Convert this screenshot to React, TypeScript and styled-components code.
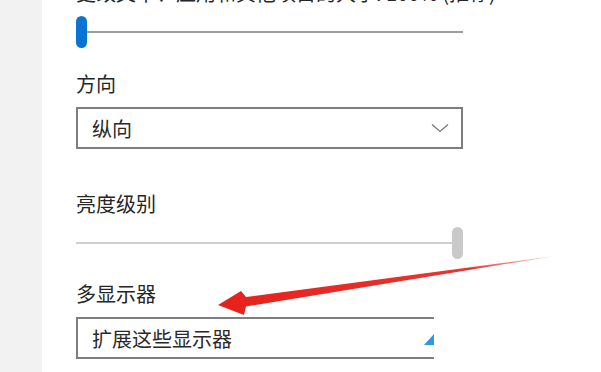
import React from "react";
import styled, { createGlobalStyle } from "styled-components";

const Global = createGlobalStyle`
  html, body { margin: 0; padding: 0; background: #ffffff; }
  body {
    width: 601px; height: 372px; overflow: hidden;
    font-family: "Noto Sans CJK SC", "Noto Sans", sans-serif;
    color: #1f1f1f;
  }
`;

const Page = styled.div`
  position: relative;
  display: flex;
  width: 601px;
  height: 372px;
  overflow: hidden;
  background: #ffffff;
`;

const Sidebar = styled.div`
  width: 42px;
  flex: none;
  background: #f2f2f2;
`;

const Main = styled.div`
  display: flex;
  flex-direction: column;
  padding-left: 34px;
  width: 387px;
`;

const Label = styled.div<{ $mt: number }>`
  margin-top: ${(p) => p.$mt}px;
  font-size: 20px;
  line-height: 24px;
  height: 24px;
  white-space: nowrap;
  color: #262626;
`;

const SliderRow = styled.div<{ $mt: number }>`
  position: relative;
  margin-top: ${(p) => p.$mt}px;
  height: 32px;
  width: 387px;
  display: flex;
  align-items: center;
`;

const Track = styled.div<{ $color: string }>`
  flex: 1;
  height: 2px;
  background: ${(p) => p.$color};
`;

const Thumb = styled.div<{ $color: string }>`
  width: 11px;
  height: 32px;
  border-radius: 6px;
  background: ${(p) => p.$color};
  flex: none;
`;

const Select = styled.div<{ $mt: number }>`
  margin-top: ${(p) => p.$mt}px;
  box-sizing: border-box;
  width: 387px;
  height: 42px;
  border: 2px solid #7e7e7e;
  display: flex;
  align-items: center;
  justify-content: space-between;
  padding: 0 12px 0 14px;
  font-size: 20px;
  color: #2a2a2a;
  background: #fff;
`;

const Cover = styled.div`
  position: absolute;
  left: 434px;
  top: 312px;
  width: 167px;
  height: 60px;
  background: #ffffff;
`;

const Corner = styled.svg`
  position: absolute;
  left: 424px;
  top: 334px;
`;

const Overlay = styled.svg`
  position: absolute;
  left: 0;
  top: 0;
  pointer-events: none;
`;

function Chevron() {
  return (
    <svg width="18" height="10" viewBox="0 0 18 10">
      <path d="M1 1.5 L9 8.5 L17 1.5" fill="none" stroke="#7a7a7a" strokeWidth="1.3" />
    </svg>
  );
}

export default function App() {
  return (
    <Page>
      <Global />
      <Sidebar />
      <Main>
        <Label $mt={-19}>更改文本、应用和其他项目的大小: 100% (推荐)</Label>
        <SliderRow $mt={11}>
          <Thumb $color="#0a74d4" />
          <Track $color="#9c9c9c" />
        </SliderRow>
        <Label $mt={24}>方向</Label>
        <Select $mt={11}>
          <span>纵向</span>
          <Chevron />
        </Select>
        <Label $mt={43}>亮度级别</Label>
        <SliderRow $mt={11}>
          <Track $color="#cfcfcf" />
          <Thumb $color="#c9c9c9" />
        </SliderRow>
        <Label $mt={23}>多显示器</Label>
        <Select $mt={11}>
          <span>扩展这些显示器</span>
        </Select>
      </Main>
      <Cover />
      <Corner width="10" height="11" viewBox="0 0 10 11">
        <polygon points="10,0 10,11 0,11" fill="#2b9ad8" />
      </Corner>
      <Overlay width="601" height="372" viewBox="0 0 601 372">
        <defs>
          <linearGradient id="ag" x1="218" y1="305" x2="555" y2="256" gradientUnits="userSpaceOnUse">
            <stop offset="0" stopColor="#e5211d" />
            <stop offset="0.75" stopColor="#e93530" />
            <stop offset="1" stopColor="#f3a9a5" stopOpacity="0.6" />
          </linearGradient>
        </defs>
        <polygon
          points="218,305 244,315 246,306.5 555,256 246,297 241,291"
          fill="url(#ag)"
        />
      </Overlay>
    </Page>
  );
}
